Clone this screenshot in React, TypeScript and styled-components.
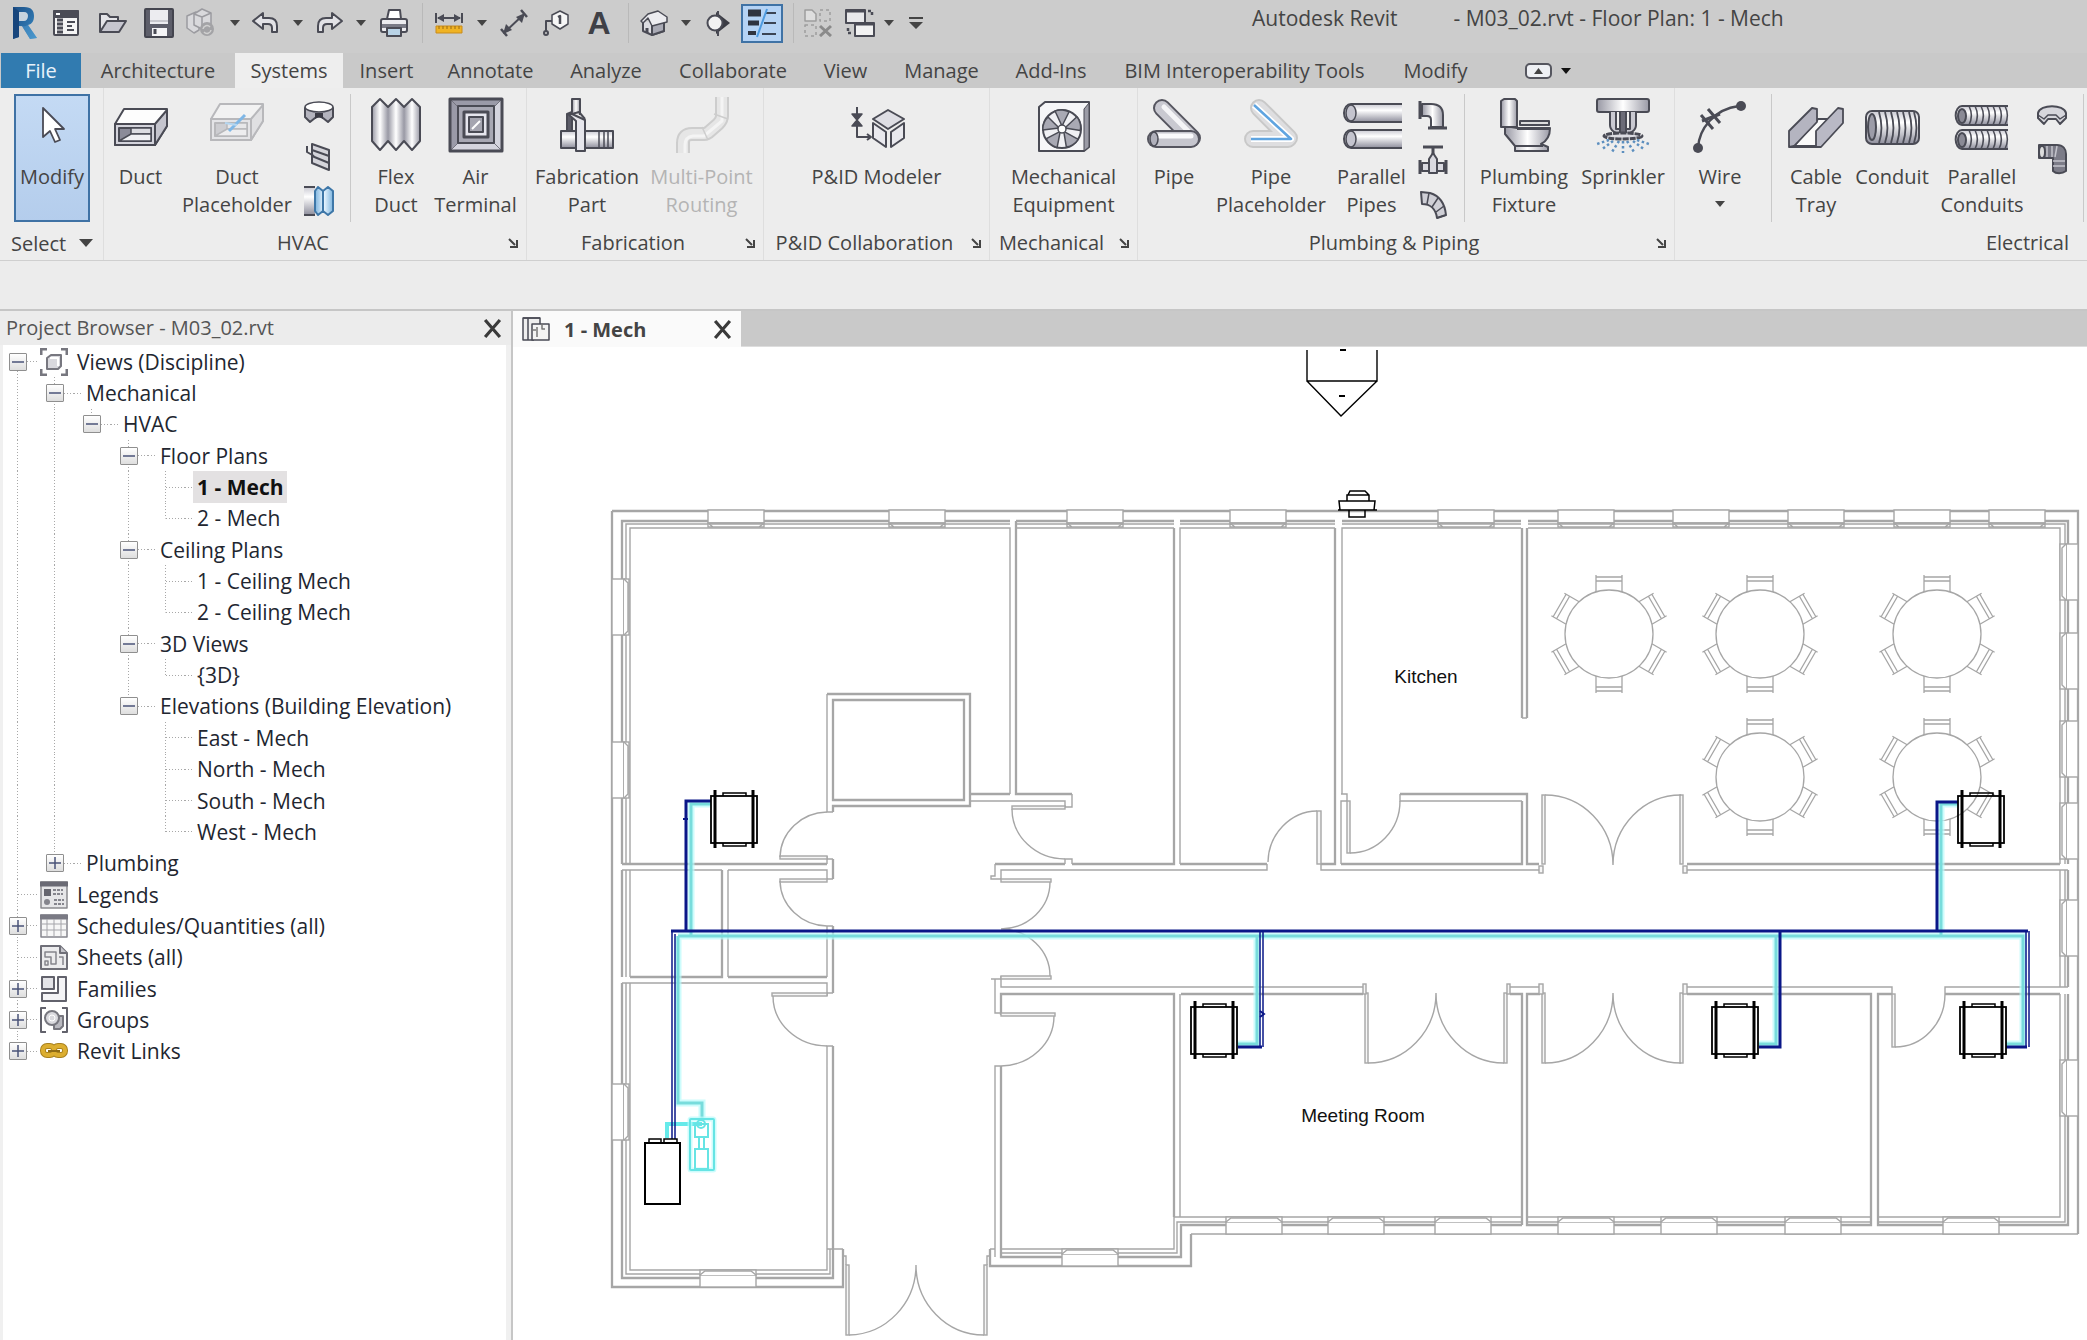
import React, { ReactNode } from "react";
import styled, { createGlobalStyle, css } from "styled-components";

const UI_FONT = `"Open Sans", "Noto Sans", sans-serif`;
const DARK = "#4a4b55";
const GREY = "#a6a6a6";

const Global = createGlobalStyle`
  * { box-sizing: border-box; }
  body { margin: 0; background: #ffffff; font-family: ${UI_FONT}; font-size: 20px; color: #444444; overflow: hidden; }
  button { font: inherit; color: inherit; background: none; border: 0; padding: 0; margin: 0; }
  h1, h2, ul { margin: 0; padding: 0; font: inherit; }
  svg { display: block; flex: none; }
`;

/* ---------- layout ---------- */

const Shell = styled.div`
  display: flex;
  flex-direction: column;
  height: 100vh;
`;

const TitleBar = styled.header`
  display: flex;
  height: 53px;
  flex: none;
  background: #cccccc;
  overflow: hidden;
`;

const QuickAccess = styled.div`
  display: flex;
  align-items: center;
  height: 46px;
  flex: none;
`;

const QuickButton = styled.button<{ $w: number }>`
  display: flex;
  align-items: center;
  justify-content: center;
  width: ${(p) => p.$w}px;
  height: 40px;
`;

const ActiveFrame = styled.span`
  display: flex;
  align-items: center;
  justify-content: center;
  width: 42px;
  height: 39px;
  border: 2px solid #3f72a5;
  background: #b5d3f5;
`;

const QuickDivider = styled.span<{ $w: number }>`
  display: flex;
  justify-content: center;
  width: ${(p) => p.$w}px;
  &::before {
    content: "";
    width: 1px;
    height: 40px;
    background: #b9b9b9;
  }
`;

const Caption = styled.h1`
  display: flex;
  align-items: center;
  gap: 56px;
  height: 36px;
  padding-left: 320px;
  font-size: 21px;
  white-space: nowrap;
`;

const TabBar = styled.nav`
  display: flex;
  height: 35px;
  flex: none;
  padding-left: 1px;
  background: #c9c9c9;
  overflow: hidden;
`;

const RibbonTab = styled.button<{ $w: number; $kind?: "file" | "active" }>`
  width: ${(p) => p.$w}px;
  flex: none;
  line-height: 36px;
  white-space: nowrap;
  ${(p) => p.$kind === "file" && css`background: #317bb0; color: #e8f2fa;`}
  ${(p) => p.$kind === "active" && css`background: #eeeeee;`}
`;

const TabToggle = styled.button`
  display: flex;
  align-items: center;
  gap: 9px;
  margin-left: 38px;
`;

const Ribbon = styled.div`
  display: flex;
  height: 173px;
  flex: none;
  background: #ededed;
  border-bottom: 1px solid #cfcfcf;
  overflow: hidden;
`;

const PanelBox = styled.section<{ $w: number }>`
  display: flex;
  flex-direction: column;
  width: ${(p) => p.$w}px;
  flex: none;
  border-right: 1px solid #dedede;
`;

const PanelBody = styled.div<{ $center?: boolean; $pad?: number }>`
  display: flex;
  height: 138px;
  padding: 6px 0 0 ${(p) => p.$pad ?? 0}px;
  justify-content: ${(p) => (p.$center ? "center" : "flex-start")};
`;

const PanelFooter = styled.div`
  display: flex;
  align-items: center;
  height: 34px;
`;

const PanelName = styled.h2`
  flex: 1;
  text-align: center;
  line-height: 34px;
  white-space: nowrap;
`;

const Launcher = styled.button`
  display: flex;
  justify-content: flex-end;
  width: 24px;
  padding-right: 8px;
`;

const SelectMenu = styled.button`
  display: flex;
  align-items: center;
  gap: 13px;
  padding-left: 11px;
`;

const BigButton = styled.button<{ $w: number; $active?: boolean; $dim?: boolean }>`
  display: flex;
  flex-direction: column;
  align-items: center;
  width: ${(p) => p.$w}px;
  height: 128px;
  flex: none;
  padding-top: 3px;
  gap: 10px;
  line-height: 28px;
  white-space: pre-line;
  text-align: center;
  color: ${(p) => (p.$dim ? "#b4b4b4" : "#444444")};
  ${(p) =>
    p.$active &&
    css`
      background: linear-gradient(#c4daf4, #b4cdec);
      box-shadow: inset 0 0 0 2px #3f72a5;
    `}
`;

const SmallStack = styled.div`
  display: flex;
  flex-direction: column;
  align-items: center;
  width: 44px;
  flex: none;
  gap: 15px;
  padding-top: 6px;
`;

const PanelDivider = styled.span`
  width: 1px;
  height: 128px;
  margin: 0 10px 0 9px;
  flex: none;
  background: #c9c9c9;
`;

const OptionsBar = styled.div`
  height: 50px;
  flex: none;
  background: #ececec;
  border-bottom: 2px solid #c6c6c6;
`;

const Workspace = styled.div`
  display: flex;
  flex: 1;
  min-height: 0;
`;

const Browser = styled.aside`
  display: flex;
  flex-direction: column;
  width: 513px;
  flex: none;
  border-right: 2px solid #c6c6c6;
  box-shadow: inset 3px 0 #f0f0f0, inset -5px 0 #f0f0f0;
`;

const BrowserHead = styled.div`
  display: flex;
  align-items: center;
  justify-content: space-between;
  height: 34px;
  flex: none;
  padding: 0 9px 0 6px;
  background: #ececec;
  color: #555555;
`;

const BrowserTitle = styled.h2`
  line-height: 36px;
`;

const Tree = styled.ul`
  display: grid;
  grid-auto-rows: 1fr;
  height: 721px;
  margin-top: 1px;
  list-style: none;
  font-size: 21px;
  color: #222630;
`;

const TreeRow = styled.li`
  display: flex;
  align-items: stretch;
`;

type Guide = "none" | "full" | "up" | "down" | "tee" | "end";

const V = (size: string, at: string) =>
  `repeating-linear-gradient(to bottom, #a8a8a8 0 1px, transparent 1px 3px) 17px ${at} / 1px ${size} no-repeat`;
const H = `repeating-linear-gradient(to right, #a8a8a8 0 1px, transparent 1px 3px) 18px 50% / 19px 1px no-repeat`;

const guideBackground: Record<Guide, string> = {
  none: "none",
  full: V("100%", "0"),
  up: V("50%", "0"),
  down: V("50%", "100%"),
  tee: `${H}, ${V("100%", "0")}`,
  end: `${H}, ${V("50%", "0")}`,
};

const GuideCell = styled.span<{ $guide: Guide; $joined?: boolean }>`
  display: flex;
  align-items: center;
  width: 37px;
  flex: none;
  padding-left: 9px;
  background: ${(p) => (p.$joined ? `${H}, ` : "")}${(p) => guideBackground[p.$guide]};
`;

const Lead = styled.span`
  width: 8px;
  background: repeating-linear-gradient(to right, #a8a8a8 0 1px, transparent 1px 3px) 0 50% / 100% 1px no-repeat;
`;

const Expander = styled.button`
  display: flex;
  align-items: center;
  justify-content: center;
  width: 18px;
  height: 18px;
  border: 1px solid #8f8f8f;
  border-radius: 1px;
  background: linear-gradient(#ffffff, #dedede);
`;

const NodeIcon = styled.span`
  display: flex;
  align-items: center;
  padding: 0 5px 0 3px;
`;

const Label = styled.span<{ $current?: boolean }>`
  display: flex;
  align-items: center;
  padding: 0 4px;
  white-space: nowrap;
  ${(p) => p.$current && css`background: #e3e1e2; color: #111111; font-weight: 700;`}
`;

const Viewer = styled.main`
  display: flex;
  flex-direction: column;
  flex: 1;
  min-width: 0;
`;

const ViewTabs = styled.div`
  display: flex;
  height: 36px;
  flex: none;
  background: #c9c9c9;
  border-bottom: 1px solid #dddddd;
`;

const ViewTab = styled.div`
  display: flex;
  align-items: center;
  width: 228px;
  height: 36px;
  padding: 0 9px;
  gap: 14px;
  background: #fafafa;
  font-weight: 700;
  white-space: nowrap;
`;

const ViewTabName = styled.span`
  flex: 1;
`;

const CloseButton = styled.button`
  display: flex;
`;

const PlanSheet = styled.svg`
  flex: 1;
  width: 100%;
  min-height: 0;
  background: #ffffff;
`;

/* ---------- icons ---------- */

const Svg = ({ w, h, children }: { w: number; h: number; children: ReactNode }) => (
  <svg width={w} height={h} viewBox={`0 0 ${w} ${h}`} fill="none" stroke={DARK} strokeWidth="2" strokeLinejoin="round" aria-hidden="true">
    {children}
  </svg>
);

const DefsSvg = styled.svg`
  position: absolute;
`;

const Gradients = () => (
  <DefsSvg width="0" height="0" aria-hidden="true">
    <defs>
      <linearGradient id="metalV" x1="0" y1="0" x2="0" y2="1">
        <stop offset="0" stopColor="#c9c9d2" /><stop offset=".35" stopColor="#ffffff" /><stop offset="1" stopColor="#8e8e9c" />
      </linearGradient>
      <linearGradient id="metalH" x1="0" y1="0" x2="1" y2="0">
        <stop offset="0" stopColor="#9898a4" /><stop offset=".5" stopColor="#ffffff" /><stop offset="1" stopColor="#9a9aa6" />
      </linearGradient>
      <linearGradient id="blueH" x1="0" y1="0" x2="1" y2="0">
        <stop offset="0" stopColor="#7db4de" /><stop offset=".5" stopColor="#e8f5ff" /><stop offset="1" stopColor="#7db4de" />
      </linearGradient>
      <linearGradient id="logo" x1="0" y1="0" x2="1" y2="1">
        <stop offset="0" stopColor="#1c4f86" /><stop offset=".6" stopColor="#2e74ad" /><stop offset="1" stopColor="#4aa0d5" />
      </linearGradient>
    </defs>
  </DefsSvg>
);

const Arrow = ({ w = 10, c = "#444444" }: { w?: number; c?: string }) => (
  <svg width={w} height={Math.ceil(w / 2) + 1} viewBox="0 0 10 6" preserveAspectRatio="none" aria-hidden="true"><path d="M0 0H10L5 6Z" fill={c} /></svg>
);

const Cross = ({ s }: { s: number }) => (
  <svg width={s} height={s} viewBox="0 0 18 18" aria-hidden="true"><path d="M2 1L16 17M16 1L2 17" stroke="#3a3a3a" strokeWidth="3" /></svg>
);

const LogoIcon = () => (
  <svg width="26" height="34" viewBox="0 0 26 34" aria-hidden="true">
    <path d="M1 1H12C20 1 22 5 22 10C22 15 20 18 16 19L25 32L18 33L10 20H7V31L1 33Z" fill="url(#logo)" />
    <path d="M7 6H12C15 6 16 8 16 10C16 13 14 15 12 15H7Z" fill="#c6d3de" />
    <path d="M7 20H10L18 33L25 32L16 19C13 21 10 20 7 20Z" fill="#4b93c8" opacity=".6" />
    <path d="M1 1L7 5V31L1 33Z" fill="#17457c" />
  </svg>
);
const HomePageIcon = () => (
  <Svg w={28} h={28}>
    <rect x="2" y="2" width="24" height="24" rx="1" fill="#f4f4f4" />
    <rect x="2" y="2" width="24" height="6" fill={DARK} /><path d="M4 5H8" stroke="#fff" />
    <path d="M5 11H11M5 15H11M5 19H11M5 23H11" strokeWidth="3" />
    <path d="M15 13H23M15 17H20M15 21H22" />
  </Svg>
);
const OpenIcon = () => (
  <Svg w={30} h={24}>
    <path d="M2 21V3H9L12 6H20V10" fill="#e4e4e8" /><path d="M2 21L9 10H28L21 21Z" fill="#c6c6cf" />
  </Svg>
);
const SaveIcon = () => (
  <Svg w={30} h={30}>
    <rect x="1" y="1" width="28" height="28" rx="1" fill="#5d5e6a" stroke="#44454f" />
    <rect x="6" y="2" width="18" height="14" fill="#ececf0" stroke="none" /><path d="M6 13H24" stroke="#c8c8ce" />
    <rect x="8" y="20" width="15" height="8" fill="#f4f4f6" stroke="none" /><path d="M11 21V26" stroke={DARK} strokeWidth="3" />
  </Svg>
);
const SyncIcon = () => (
  <Svg w={30} h={30}>
    <g stroke="#9b9ba0" strokeWidth="1.500" fill="#d9d9dc">
      <path d="M2 8L11 4L14 6V22L9 25L2 20Z" /><path d="M9 6L17 1L26 5V18L17 21L9 17Z" /><path d="M9 6L17 9L26 5M17 9V21" />
    </g>
    <circle cx="22" cy="21" r="7" fill="#a3a3a6" stroke="none" />
    <path d="M18 21A4 4 0 0 1 25 19M26 22A4 4 0 0 1 19 24" stroke="#d0d0d0" strokeWidth="1.500" />
  </Svg>
);
const UndoIcon = () => (
  <Svg w={28} h={24}><path d="M2 10L12 2V7H18C24 7 26 11 26 15V21H21V17C21 14 19 13 17 13H12V18Z" fill="#e2e2e6" /></Svg>
);
const RedoIcon = () => (
  <Svg w={28} h={24}><path d="M26 10L16 2V7H10C4 7 2 11 2 15V21H7V17C7 14 9 13 11 13H16V18Z" fill="#e2e2e6" /></Svg>
);
const PrintIcon = () => (
  <Svg w={30} h={30}>
    <path d="M8 11L10 2H21L22 11Z" fill="#fff" /><rect x="2" y="11" width="26" height="13" rx="2" fill="#ececef" />
    <path d="M3 18H27" strokeWidth="4" stroke="#7a7b86" /><path d="M8 20H22V28H8Z" fill="#b9d3e6" />
  </Svg>
);
const MeasureIcon = () => (
  <Svg w={28} h={22}>
    <path d="M3 6H25M1 1V11M27 1V11" /><path d="M2 6L9 2V10ZM26 6L19 2V10Z" fill={DARK} stroke="none" />
    <rect x="1" y="14" width="26" height="7" fill="#f0b323" stroke="#c88b1c" strokeWidth="1" />
    <path d="M4 14V17M8 14V17M12 14V17M16 14V17M20 14V17M24 14V17" stroke="#9b6a12" strokeWidth="1" />
  </Svg>
);
const DimensionIcon = () => (
  <Svg w={30} h={30}>
    <path d="M7 23L23 8" /><path d="M4 26L7 16L13 22ZM26 5L23 15L17 9Z" fill={DARK} stroke="none" />
    <path d="M2 21L8 28M22 2L28 9" strokeWidth="2.500" />
  </Svg>
);
const TagIcon = () => (
  <Svg w={28} h={28}>
    <path d="M4 23V12H11" /><circle cx="4" cy="24" r="2" /><path d="M18 2L26 6V15L18 20L10 15V6Z" fill="#f6f6f6" strokeWidth="1.500" />
    <path d="M16 8L18 7V15" strokeWidth="2.500" />
  </Svg>
);
const TextTool = styled.span`
  font: 700 32px/36px "Liberation Sans", sans-serif;
  color: #3f4046;
`;
const HouseIcon = () => (
  <Svg w={28} h={28}>
    <path d="M3 13V22L12 26L24 22V11" fill="#dcdce1" /><path d="M12 15V26L24 22V9Z" fill="#a9aab5" />
    <path d="M1 12L8 5L18 2L27 8V13L12 17L8 9L3 14Z" fill="#ececf0" strokeWidth="1.500" /><path d="M7 19V24" strokeWidth="3" />
  </Svg>
);
const SectionIcon = () => (
  <Svg w={26} h={26}>
    <path d="M11 2L25 13L11 24Z" fill="#3b3c44" stroke="none" /><circle cx="10" cy="13" r="7.500" fill="#f2f2f2" /><path d="M13 1V5M13 21V26" />
  </Svg>
);
const ThinLinesIcon = () => (
  <Svg w={32} h={30}>
    <path d="M2 5H15" strokeWidth="7" stroke="#2f3440" /><path d="M2 15H13" strokeWidth="5" stroke="#2f3440" /><path d="M2 25H10" strokeWidth="4" stroke="#2f3440" />
    <path d="M20 5H30M18 15H30M16 26H30" stroke="#3b4454" /><path d="M21 1L11 29" stroke="#4e9be0" />
  </Svg>
);
const CloseHiddenIcon = () => (
  <Svg w={28} h={28}>
    <g stroke="#9d9d9d" strokeWidth="1.500"><path d="M1 1H8L12 5V12H1Z" fill="#dedede" /><path d="M16 1H26V12H16ZM1 16H12V27H1Z" strokeDasharray="3 3" /></g>
    <path d="M16 17L27 27M27 17L16 27" stroke="#8a8a8a" strokeWidth="3" />
  </Svg>
);
const SwitchIcon = () => (
  <Svg w={30} h={30}>
    <rect x="1" y="2" width="19" height="13" fill="#e8e8ea" /><path d="M1 3H20" strokeWidth="3" />
    <rect x="10" y="15" width="19" height="13" fill="#f2f2f2" /><path d="M10 16H29" strokeWidth="3" />
    <path d="M23 3H27V8M3 20V25H7" strokeDasharray="3 2" strokeWidth="2.500" />
  </Svg>
);
const CustomizeIcon = () => (
  <svg width="14" height="14" viewBox="0 0 14 14" aria-hidden="true"><path d="M0 1H14V3H0ZM0 6H14L7 13Z" fill="#444" /></svg>
);

const ModifyIcon = () => (
  <Svg w={56} h={56}><path d="M19 11V40L26 34L31 45L36 43L31 32L40 32Z" fill="#fff" strokeWidth="1.800" /></Svg>
);
const ductShape = (
  <>
    <path d="M2 27L11 12H54V29L42 48H2Z" fill="#fdfdfd" /><path d="M42 27L54 13V29L42 48Z" fill="#c5c5ce" />
    <path d="M2 27H42V48H2Z" fill="#d4d4dc" /><path d="M6 31H38V44H6Z" fill="#8b8b99" />
    <path d="M18 31H38V37H18Z" fill="#dcdce2" strokeWidth="1.500" /><path d="M6 44L18 37H38V44Z" fill="#f0f0f4" strokeWidth="1.500" /><path d="M2 27H42L54 13" strokeWidth="1" />
  </>
);
const DuctIcon = () => <Svg w={56} h={56}>{ductShape}</Svg>;
const DuctPlaceholderIcon = () => (
  <Svg w={56} h={56}>
    <g opacity=".32" transform="translate(0 -5)">{ductShape}</g>
    <path d="M20 34L36 18" stroke="#7fb7e6" strokeWidth="3" /><path d="M16 26L28 28" stroke="#b5d6f0" strokeWidth="2" />
  </Svg>
);
const DuctFittingIcon = () => (
  <Svg w={30} h={28}>
    <path d="M1 8V17L6 22L11 18C13 16 17 16 19 18L24 22L29 17V8Z" fill="#b4b4be" />
    <ellipse cx="15" cy="7" rx="14" ry="5" fill="#fff" strokeWidth="1.500" /><path d="M11 13H19V19C16 17 14 17 11 19Z" fill="#3b3b45" stroke="none" />
  </Svg>
);
const DuctAccessoryIcon = () => (
  <Svg w={30} h={28}>
    <path d="M8 1L25 7V27L8 20Z" fill="#d4d4da" /><path d="M8 7L25 13M8 13L25 20" /><path d="M3 3V9L10 13" />
  </Svg>
);
const ConvertFlexIcon = () => (
  <Svg w={30} h={30}>
    <rect x="0" y="1" width="11" height="28" fill="url(#metalV)" stroke="none" /><path d="M0 1H11M0 29H11" />
    <path d="M11 5L14 1L19 5L24 1L29 5V25L24 29L19 25L14 29L11 25Z" fill="url(#blueH)" stroke="#3e77a8" /><path d="M19 5V25" stroke="#3e77a8" />
  </Svg>
);
const FlexDuctIcon = () => (
  <Svg w={56} h={56}>
    {[4, 20, 36].map((x) => (
      <path key={x} d={`M${x} 10L${x + 8} 2L${x + 16} 10V44L${x + 8} 53L${x} 44Z`} fill="url(#metalH)" stroke="none" />
    ))}
    <path d="M4 10L12 2L20 10L28 2L36 10L44 2L52 10V44L44 53L36 44L28 53L20 44L12 53L4 44Z" />
  </Svg>
);
const AirTerminalIcon = () => (
  <Svg w={56} h={56}>
    <rect x="2" y="2" width="52" height="52" fill="#9a9aa8" /><path d="M2 54L54 54V2Z" fill="#d4d4de" stroke="none" />
    <path d="M2 2L54 54M54 2L2 54" stroke="#74747f" strokeWidth="1" />
    <rect x="10" y="9" width="36" height="37" fill="#a8a8b4" /><rect x="16" y="15" width="24" height="25" fill="#e6e6ee" strokeWidth="3" />
    <rect x="21" y="20" width="14" height="15" fill="#a5a5b0" /><path d="M24 32L32 24" stroke="#fff" /><rect x="2" y="2" width="52" height="52" strokeWidth="3" />
  </Svg>
);
const FabricationIcon = () => (
  <Svg w={56} h={56}>
    <rect x="2" y="34" width="52" height="17" fill="url(#metalV)" /><path d="M40 34V51M45 34V51M49 34V51" strokeWidth="1.500" />
    <path d="M8 34V17L13 15V34Z" fill="#5c5c68" /><path d="M13 15V2H21V18" fill="url(#metalH)" />
    <path d="M9 17L17 24V54H26V23L13 17Z" fill="#e6e6ec" /><path d="M13 17L20 15L26 22" />
  </Svg>
);
const MultiPointIcon = () => (
  <Svg w={56} h={56}>
    <g stroke="#cdcdcd">
      <path d="M9 56V46Q9 37 18 37H30Q33 37 36 34L44 27Q48 23 48 19V0" strokeWidth="14" />
      <path d="M9 57V46Q9 37 18 37H30Q33 37 36 34L44 27Q48 23 48 19V0" strokeWidth="10" stroke="#e6e6e6" />
      <path d="M11 57V48Q11 40 19 39H30L48 24V0" strokeWidth="3" stroke="#f4f4f4" />
      <path d="M28 30L34 43M40 17L54 22" strokeWidth="1.500" />
    </g>
  </Svg>
);
const PidIcon = () => (
  <Svg w={56} h={56}>
    <path d="M8 10V40H22M18 37L22 40L18 43" strokeWidth="2" /><path d="M3 17H13L8 23ZM3 29H13L8 23Z" fill={DARK} strokeWidth="1.500" />
    <path d="M24 22L39 13L55 22L39 32Z" fill="#dedee4" /><path d="M24 26V41L37 50V35ZM55 26V41L42 50V35Z" fill="#e9e9ee" />
  </Svg>
);
const MechanicalIcon = () => (
  <Svg w={56} h={56}>
    <path d="M3 10L9 5H53V50L48 54H3Z" fill="#f6f6f8" /><path d="M48 54V12L53 6V50Z" fill="#9b9ba6" strokeWidth="1" />
    <circle cx="26" cy="32" r="19" fill="#f0f0f4" />
    {[0, 72, 144, 216, 288].map((a) => (
      <path key={a} d="M26 29L19 14C24 12 30 13 33 15Z" fill="#a9a9b4" strokeWidth="1.500" transform={`rotate(${a} 26 32)`} />
    ))}
    <circle cx="26" cy="32" r="4" fill="#fff" strokeWidth="1.500" />
  </Svg>
);
const PipeIcon = () => (
  <Svg w={56} h={56}>
    <path d="M16 11L46 41" stroke="#55555f" strokeWidth="18" strokeLinecap="round" /><path d="M16 11L46 41" stroke="#c9c9d1" strokeWidth="14" strokeLinecap="round" />
    <path d="M18 10L47 39" stroke="#f4f4f7" strokeWidth="5" strokeLinecap="round" />
    <path d="M10 42H45" stroke="#55555f" strokeWidth="18" strokeLinecap="round" /><path d="M10 42H45" stroke="#c6c6ce" strokeWidth="14" strokeLinecap="round" />
    <path d="M10 39H45" stroke="#fafafc" strokeWidth="5" strokeLinecap="round" /><ellipse cx="8" cy="42" rx="4" ry="7" fill="#b0b0bb" strokeWidth="1.500" />
  </Svg>
);
const PipePlaceholderIcon = () => (
  <Svg w={56} h={56}>
    <path d="M16 11L46 41M10 42H45" stroke="#c8c8c8" strokeWidth="18" strokeLinecap="round" /><path d="M16 11L46 41M10 42H45" stroke="#dedee0" strokeWidth="14" strokeLinecap="round" />
    <path d="M11 8L48 42H8" stroke="#ffffff" strokeWidth="6" /><path d="M11 8L48 42H8" stroke="#5fa4e0" strokeWidth="2.500" />
  </Svg>
);
const ParallelPipesIcon = () => (
  <Svg w={60} h={56}>
    {[7, 33].map((y) => (
      <g key={y}>
        <path d={`M60 ${y}H9A7 9 0 0 0 9 ${y + 18}H60`} fill="url(#metalV)" /><ellipse cx="9" cy={y + 9} rx="5" ry="8" fill="#c4c4ce" strokeWidth="1.500" />
      </g>
    ))}
  </Svg>
);
const ElbowIcon = () => (
  <Svg w={30} h={30}>
    <path d="M4 4H13C22 4 25 9 25 15V27H13V20C13 17 11 16 9 16H4Z" fill="url(#metalH)" /><path d="M2 1V19M10 28H29" strokeWidth="3" />
  </Svg>
);
const ValveIcon = () => (
  <Svg w={30} h={30}>
    <path d="M5 2H25" strokeWidth="3" /><path d="M15 2V10" strokeWidth="3" /><path d="M11 14L15 8L19 14V28H11Z" fill="#d9d9e0" />
    <path d="M4 18H11V26H4ZM19 18H26V26H19Z" fill="#d9d9e0" /><path d="M2 15V29M28 15V29" strokeWidth="3" />
  </Svg>
);
const FlexPipeIcon = () => (
  <Svg w={30} h={30}>
    <path d="M3 2L12 3C22 6 27 15 28 25L19 28C18 20 13 14 4 14Z" fill="#cfcfd6" /><path d="M11 3L9 14M20 8L14 17M26 16L18 22M28 25L19 28" strokeWidth="1.500" />
  </Svg>
);
const FixtureIcon = () => (
  <Svg w={56} h={56}>
    <path d="M5 4L8 2H19L21 4V30H5Z" fill="url(#metalH)" /><path d="M9 30V37L19 49V54H52V50L45 47C51 44 54 38 54 31H21L15 30Z" fill="url(#metalH)" />
    <rect x="24" y="24" width="29" height="4" fill="#ddd" /><path d="M21 32H54M19 49H47" />
  </Svg>
);
const SprinklerIcon = () => (
  <Svg w={56} h={56}>
    <rect x="2" y="2" width="52" height="13" rx="2" fill="url(#metalH)" /><path d="M15 15V28C15 34 21 37 28 37C35 37 41 34 41 28V15" fill="#c9c9d1" /><path d="M21 15V32H35V15" fill="#eee" />
    <path d="M25 15V36H31V15" fill="#6c6c78" /><ellipse cx="28" cy="39" rx="19" ry="3" fill="#dcdce2" strokeWidth="3" strokeDasharray="6 1" />
    <path d="M14 43L2 47M18 44L6 53M24 44L17 55M28 44V56M32 44L39 55M38 44L50 53M42 43L54 47" stroke="#5d8fbf" strokeWidth="2.500" strokeDasharray="2.500 2.500" />
  </Svg>
);
const WireIcon = () => (
  <Svg w={56} h={56}>
    <path d="M6 51C7 32 22 12 47 9" strokeWidth="2.500" /><circle cx="6" cy="51" r="5" fill={DARK} stroke="none" /><circle cx="49" cy="9" r="5" fill={DARK} stroke="none" />
    <path d="M9 18L21 32M16 12L28 26M10 24L28 17" strokeWidth="3" />
  </Svg>
);
const CableTrayIcon = () => (
  <Svg w={56} h={56}>
    <path d="M6 49L30 22H50L30 49Z" fill="#fafafa" /><path d="M1 34L24 11L29 12V25L6 49L1 50Z" fill="#b4b4c0" strokeWidth="1.800" />
    <path d="M28 34L50 11L55 12V26L33 50H28Z" fill="#b9b9c5" strokeWidth="1.800" /><path d="M1 50H32" />
  </Svg>
);
const ConduitIcon = () => (
  <Svg w={56} h={56}>
    <rect x="2" y="14" width="53" height="33" rx="6" fill="url(#metalV)" /><ellipse cx="8" cy="30" rx="4" ry="13" fill="#9c9ca8" />
    {[15, 21, 27, 33, 39, 45, 50].map((x) => <path key={x} d={`M${x} 15C${x + 3} 25 ${x + 3} 37 ${x} 46`} strokeWidth="1.800" />)}
  </Svg>
);
const ParallelConduitsIcon = () => (
  <Svg w={56} h={56}>
    {[9, 33].map((y) => (
      <g key={y}>
        <path d={`M54 ${y}H8A6 9 0 0 0 8 ${y + 19}H54`} fill="url(#metalV)" /><ellipse cx="8" cy={y + 10} rx="4" ry="7" fill="#8a8a95" />
        {[15, 21, 27, 33, 39, 45, 51].map((x) => <path key={x} d={`M${x} ${y}C${x + 3} ${y + 6} ${x + 3} ${y + 13} ${x} ${y + 19}`} strokeWidth="1.500" />)}
      </g>
    ))}
  </Svg>
);
const TrayFittingIcon = () => (
  <Svg w={30} h={28}>
    <path d="M1 13C3 4 27 4 29 13V18L23 24L19 19H11L7 24L1 18Z" fill="#d6d6dc" /><path d="M1 15L7 19L11 15H19L23 19L29 15" strokeWidth="1.500" />
  </Svg>
);
const ConduitFittingIcon = () => (
  <Svg w={30} h={32}>
    <path d="M2 2H20C26 2 29 6 29 11V28C25 31 19 31 16 28V15H2Z" fill="#7c7c88" /><ellipse cx="5" cy="9" rx="3" ry="6" fill="#ddd" />
    <path d="M10 3V14M15 3V14M20 3L18 14M16 18H28M16 23H28" strokeWidth="1.500" stroke="#c4c4cc" />
  </Svg>
);

const LauncherIcon = () => (
  <svg width="10" height="10" viewBox="0 0 10 10" aria-hidden="true"><path d="M1 1L7 7M9 2V9H2" fill="none" stroke="#444" strokeWidth="2" /></svg>
);
const RibbonToggleIcon = () => (
  <svg width="27" height="16" viewBox="0 0 27 16" aria-hidden="true">
    <rect x="1" y="1" width="25" height="14" rx="4" fill="#eef0f4" stroke="#55565f" strokeWidth="2" /><path d="M9 11L13.500 5L18 11Z" fill="#444" />
  </svg>
);

const ViewsIcon = () => (
  <Svg w={28} h={28}>
    <g stroke="#77777f"><path d="M1 7V1H7M21 1H27V7M27 21V27H21M7 27H1V21" strokeWidth="3" /><path d="M7 10L11 7H21V18L18 21H7Z" fill="#d9d9de" /><path d="M10 10H18V18" stroke="#fff" /></g>
  </Svg>
);
const LegendsIcon = () => (
  <Svg w={28} h={28}>
    <rect x="1" y="1" width="26" height="26" fill="#e6e6e8" stroke="#8a8a8f" strokeWidth="1.500" /><path d="M0 3H28" strokeWidth="5" stroke="#6a6a74" />
    <rect x="4" y="8" width="7" height="7" fill="#66666f" stroke="none" /><circle cx="7" cy="21" r="3" fill="#85858d" stroke="none" /><path d="M13 9H23M13 13H23M14 19H24M14 23H24" stroke="#85858d" strokeDasharray="3 1" />
  </Svg>
);
const SchedulesIcon = () => (
  <Svg w={28} h={24}>
    <rect x="1" y="1" width="26" height="22" fill="#f7f7f7" stroke="#85858d" strokeWidth="1.500" /><path d="M0 3H28" strokeWidth="5" stroke="#7a7a84" />
    <path d="M7 5V23M14 5V23M21 5V23M1 10H27M1 16H27" strokeWidth="1" stroke="#a5a5aa" />
  </Svg>
);
const SheetsIcon = () => (
  <Svg w={28} h={26}>
    <path d="M1 2H20L27 9V25H1Z" fill="#ececee" stroke="#6f6f78" /><path d="M20 2V9H27" fill="#c4c4ca" stroke="#6f6f78" />
    <path d="M5 8H16V20H11V13H5ZM5 17H8V21H5ZM19 13H23V21" strokeWidth="1.500" stroke="#85858d" />
  </Svg>
);
const FamiliesIcon = () => (
  <Svg w={28} h={28}><path d="M2 2H14V14H2Z" fill="#e4e4e8" stroke="#62626c" /><path d="M18 2H26V26H2V18H18Z" fill="#f4f4f6" stroke="#62626c" /></Svg>
);
const GroupsIcon = () => (
  <Svg w={28} h={28}>
    <path d="M6 2H1V26H6M22 2H27V26H22" stroke="#62626c" /><path d="M14 10H23V20L20 23H14Z" fill="#b9b9c0" stroke="#77777f" />
    <circle cx="12" cy="12" r="7" fill="#d9d9de" stroke="#77777f" /><circle cx="12" cy="12" r="3" stroke="#fff" strokeWidth="1" />
  </Svg>
);
const LinksIcon = () => (
  <Svg w={28} h={16}>
    <rect x="3" y="3" width="11" height="9" rx="4" stroke="#a9821f" strokeWidth="6" /><rect x="14" y="3" width="11" height="9" rx="4" stroke="#a9821f" strokeWidth="6" />
    <rect x="3" y="3" width="11" height="9" rx="4" stroke="#dcae30" strokeWidth="4" /><rect x="14" y="3" width="11" height="9" rx="4" stroke="#dcae30" strokeWidth="4" />
    <path d="M8 8H20" stroke="#8f6c14" />
  </Svg>
);
const PlanViewIcon = () => (
  <Svg w={28} h={28}>
    <path d="M12 25H1V3H18V9" strokeWidth="1.500" fill="#eeeeee" /><path d="M6 3V25M1 3H18" strokeWidth="1.500" /><rect x="10" y="9" width="17" height="16" fill="#f4f4f4" strokeWidth="1.500" />
    <path d="M15 12V22M10 15H14M20 9V14H23" strokeWidth="1.500" stroke="#777" />
  </Svg>
);

/* ---------- ribbon ---------- */

const Panel = ({ name, w, center, pad, children }: { name: string; w: number; center?: boolean; pad?: number; children: ReactNode }) => (
  <PanelBox $w={w}>
    <PanelBody $center={center} $pad={pad}>{children}</PanelBody>
    <PanelFooter>
      <PanelName>{name}</PanelName>
      <Launcher aria-label={`${name} settings`}><LauncherIcon /></Launcher>
    </PanelFooter>
  </PanelBox>
);

const Tool = ({ label, w, icon, dim, menu }: { label: string; w: number; icon: ReactNode; dim?: boolean; menu?: boolean }) => (
  <BigButton $w={w} $dim={dim} disabled={dim}>
    {icon}
    <span>{label}</span>
    {menu && <Arrow />}
  </BigButton>
);

const tabs: [string, number, ("file" | "active")?][] = [
  ["File", 80, "file"], ["Architecture", 154], ["Systems", 108, "active"], ["Insert", 87], ["Annotate", 121], ["Analyze", 110],
  ["Collaborate", 144], ["View", 81], ["Manage", 111], ["Add-Ins", 108], ["BIM Interoperability Tools", 279], ["Modify", 103],
];

/* ---------- project browser ---------- */

type Node = { guides: Guide[]; box?: "-" | "+"; icon?: ReactNode; label: string; current?: boolean };
const n: Guide = "none";
const deep: Guide[] = ["full", "full", n, "full"];
const shallow: Guide[] = ["full", "full", n, n];

const nodes: Node[] = [
  { guides: ["down"], box: "-", icon: <ViewsIcon />, label: "Views (Discipline)" },
  { guides: ["full", "full"], box: "-", label: "Mechanical" },
  { guides: ["full", "full", "up"], box: "-", label: "HVAC" },
  { guides: deep, box: "-", label: "Floor Plans" },
  { guides: [...deep, "tee"], label: "1 - Mech", current: true },
  { guides: [...deep, "end"], label: "2 - Mech" },
  { guides: deep, box: "-", label: "Ceiling Plans" },
  { guides: [...deep, "tee"], label: "1 - Ceiling Mech" },
  { guides: [...deep, "end"], label: "2 - Ceiling Mech" },
  { guides: deep, box: "-", label: "3D Views" },
  { guides: [...deep, "end"], label: "{3D}" },
  { guides: ["full", "full", n, "up"], box: "-", label: "Elevations (Building Elevation)" },
  { guides: [...shallow, "tee"], label: "East - Mech" },
  { guides: [...shallow, "tee"], label: "North - Mech" },
  { guides: [...shallow, "tee"], label: "South - Mech" },
  { guides: [...shallow, "end"], label: "West - Mech" },
  { guides: ["full", "up"], box: "+", label: "Plumbing" },
  { guides: ["tee"], icon: <LegendsIcon />, label: "Legends" },
  { guides: ["full"], box: "+", icon: <SchedulesIcon />, label: "Schedules/Quantities (all)" },
  { guides: ["tee"], icon: <SheetsIcon />, label: "Sheets (all)" },
  { guides: ["full"], box: "+", icon: <FamiliesIcon />, label: "Families" },
  { guides: ["full"], box: "+", icon: <GroupsIcon />, label: "Groups" },
  { guides: ["up"], box: "+", icon: <LinksIcon />, label: "Revit Links" },
];

const TreeItem = ({ node }: { node: Node }) => {
  const last = node.guides.length - 1;
  return (
    <TreeRow>
      {node.guides.map((g, i) => (
        <GuideCell key={i} $guide={g} $joined={i === last && !!node.box}>
          {i === last && node.box && (
            <Expander aria-label={`${node.box === "-" ? "Collapse" : "Expand"} ${node.label}`}>
              <svg width="12" height="12" viewBox="0 0 12 12" aria-hidden="true">
                <path d={node.box === "-" ? "M0 6H12" : "M0 6H12M6 0V12"} stroke="#4a5378" strokeWidth="1.500" />
              </svg>
            </Expander>
          )}
        </GuideCell>
      ))}
      {node.icon ? <NodeIcon>{node.icon}</NodeIcon> : <Lead />}
      <Label $current={node.current}>{node.label}</Label>
    </TreeRow>
  );
};

/* ---------- floor plan ---------- */

const TopWindow = ({ x, w = 56 }: { x: number; w?: number }) => (
  <g fill="#fff"><rect x={x} y="510" width={w} height="13" /><path d={`M${x} 523H${x + w}V527H${x}ZM${x} 523L${x + 5} 527H${x + w - 5}L${x + w} 523`} /></g>
);
const BottomWindow = ({ x, y, w = 56 }: { x: number; y: number; w?: number }) => (
  <g fill="#fff"><rect x={x} y={y} width={w} height="5" /><rect x={x} y={y + 5} width={w} height="12" /><path d={`M${x} ${y + 5}L${x + 5} ${y + 1}H${x + w - 5}L${x + w} ${y + 5}`} /></g>
);
const LeftWindow = ({ y }: { y: number }) => (
  <g fill="#fff"><rect x="612" y={y} width="12" height="56" /><rect x="624" y={y} width="5" height="56" /><path d={`M624 ${y}L628 ${y + 4}V${y + 52}L624 ${y + 56}`} /></g>
);
const RightWindow = ({ y, h = 56 }: { y: number; h?: number }) => (
  <g fill="#fff"><rect x="2066" y={y} width="12" height={h} /><rect x="2060" y={y} width="6" height={h} /><path d={`M2066 ${y}L2062 ${y + 4}V${y + h - 4}L2066 ${y + h}`} /></g>
);

const Table = ({ x, y }: { x: number; y: number }) => (
  <g transform={`translate(${x} ${y})`} strokeWidth="1.300">
    <circle r="44" />
    {[0, 60, 120, 180, 240, 300].map((a) => (
      <path key={a} d="M-13 -42V-59M13 -42V-59M-13 -57H13M-13 -53H13" transform={`rotate(${a})`} />
    ))}
  </g>
);

const FanCoil = ({ x, y }: { x: number; y: number }) => (
  <g transform={`translate(${x} ${y})`} stroke="#000" fill="none" strokeWidth="2">
    <rect x="0" y="0" width="46" height="47" strokeWidth="1.800" />
    <path d="M12 0V-3H35V0M12 47V50H35V47" strokeWidth="1.500" />
    <path d="M4 -6V52M42 -6V52" strokeWidth="3" />
  </g>
);

const thick = [
  "M612 511H2078V1234M612 511V1287H843V1249",
  "M1191 1234V1266H990V1249",
  "M622 864V521H1010M622 870V977M622 983V1278H833V1046",
  "M1016 521H1174M1180 521H1335M1342 521H1521M1528 521H2068V864M2068 870V987M2068 994V1225H1878V994H1892",
  "M1016 521V794H1072M1174 528V864H1072M1335 528V864H1321M1522 528V718M1527 528V718",
  "M970 801V794H1010M827 694H970V794M833 700H964V800H833ZM970 801V806H833V812",
  "M622 864H827M1180 864H1267M995 864H1065M1341 864H1522V801M1400 794H1527V864H1539M1687 864H2060",
  "M722 870V977H630M728 977H827M833 859V879M833 926V993",
  "M1001 1015V994H1174V1217M1181 994H1363M1510 994H1522V1225M1540 994H1527V1225H1871V994H1687M1945 994H2060",
  "M1001 1066V1257H1181V1225H1522",
];

const thin = [
  "M626 864V524H1010M626 870V977M626 983V1274H830V1249M1016 524H1174M1180 524H1335M1342 524H1521M1528 524H2065V864M2065 870V987M2065 994V1222H1878M1871 1222H1527M1522 1222H1177V1253H1001",
  "M630 864V528H1010V794M630 870V977M630 983V1270H827V1046H833M1016 528H1174M1180 864V528H1335M1342 794V528H1521M1528 528H2060V864M2060 870V987M2060 994V1217H1878M1871 1217H1527M1522 1217H1174V1249H1001",
  "M827 694V812H833M970 801H1065V807H1072V794M1065 864V859H1072V864M1522 718H1527",
  "M622 870H722M728 870H827V879H833M728 870V977M827 856V864M827 859H833",
  "M622 983H827V996M827 870V879M827 926V977M827 926H833M827 993H833M827 1249H843",
  "M995 864V876H991V879H1001V870H1267V864M1001 976V987H1363M991 979H1001M995 979V1013H1001M1001 1066H995V1257M990 1249H995",
  "M1180 994V1217M1321 864V870H1539M1341 794H1347V801H1341V864M1400 794V801H1522M1687 870H2068M1510 987H1540M1687 987H1892V994M1945 994V987H2068",
  "M843 1256H846V1265M990 1256H987V1265M2078 1234H1191",
];

const doorLeaves = [
  [780, 856, 47, 3], [780, 879, 47, 3], [1012, 806, 53, 3], [1001, 879, 50, 3], [1001, 976, 50, 3], [772, 993, 55, 3], [1001, 1013, 54, 3],
  [1317, 811, 4, 53], [1347, 801, 3, 52], [1542, 795, 3, 69], [1680, 795, 3, 69], [1542, 993, 3, 70], [1680, 993, 3, 70], [1365, 993, 3, 70],
  [1504, 993, 3, 70], [1892, 994, 3, 53], [846, 1265, 3, 70], [984, 1265, 3, 70],
  [1539, 866, 4, 7], [1683, 866, 4, 7], [1539, 984, 4, 10], [1683, 984, 4, 10], [1363, 984, 3, 10], [1507, 984, 3, 10],
];

const swings = [
  "M827 812A48 46 0 0 0 780 857", "M780 881A48 46 0 0 0 827 926", "M1012 809A53 50 0 0 0 1065 859", "M1050 882A50 47 0 0 1 1001 929A50 47 0 0 1 1050 976",
  "M773 996A54 50 0 0 0 827 1046", "M1054 1016A54 50 0 0 1 1001 1066", "M1317 811A50 52 0 0 0 1268 862", "M1350 853A50 52 0 0 0 1400 801",
  "M1545 795A68 70 0 0 1 1613 865A68 70 0 0 1 1681 795", "M1545 1063A68 70 0 0 0 1613 993A68 70 0 0 0 1681 1063",
  "M1368 1063A68 70 0 0 0 1436 993A68 70 0 0 0 1504 1063", "M1895 1047A50 53 0 0 0 1945 994", "M849 1335A68 70 0 0 0 916 1265A68 70 0 0 0 984 1335",
];

const supply = "M678 936H2023V1044H2006M1257 936V1044H1238M1776 936V1044H1759M1941 936V804H1958M691 936V804H711M678 936V1103H702V1119";

const RoomName = styled.text`
  font: 19px "Liberation Sans", Arial, sans-serif;
  fill: #111111;
  stroke: none;
`;

const FloorPlan = () => (
  <PlanSheet viewBox="513 347 1574 993" preserveAspectRatio="xMidYMin meet" role="img" aria-label="Floor plan 1 - Mech" fill="none">
    <g stroke={GREY}>
      <path d={thin.join("")} strokeWidth="1.400" />
      <path d={thick.join("")} strokeWidth="2.300" />
      <g strokeWidth="1.400">
        {doorLeaves.map(([x, y, w, h], i) => <rect key={i} x={x} y={y} width={w} height={h} fill="#f6f6f6" />)}
        <path d={swings.join("")} />
        {[708, 889, 1067, 1230, 1438, 1558, 1673, 1788, 1894, 1989].map((x) => <TopWindow key={x} x={x} />)}
        {[579, 742, 1084].map((y) => <LeftWindow key={y} y={y} />)}
        {[544, 633, 721, 803, 900, 1060].map((y) => <RightWindow key={y} y={y} />)}
        {[1226, 1328, 1435, 1558, 1661, 1785, 1943].map((x) => <BottomWindow key={x} x={x} y={1217} />)}
        <BottomWindow x={700} y={1270} />
        <BottomWindow x={1062} y={1249} />
      </g>
      <Table x={1609} y={634} /><Table x={1760} y={634} /><Table x={1937} y={634} /><Table x={1760} y={777} /><Table x={1937} y={777} />
    </g>

    <path d={supply} stroke="#b8fbfb" strokeWidth="7" opacity=".7" />
    <path d={supply} stroke="#78dcdc" strokeWidth="3" />
    <path d="M667 1138V1124H702" stroke="#66eaea" strokeWidth="4" />
    <g stroke="#b8fbfb" strokeWidth="5" opacity=".7"><rect x="690" y="1119" width="24" height="51" rx="1" /></g>
    <g stroke="#66e4e4" strokeWidth="2">
      <rect x="690" y="1119" width="24" height="51" rx="1" /><path d="M695 1137V1124H708V1137ZM699 1137V1149M704 1137V1149M695 1149H708V1169H695Z" />
      <circle cx="701" cy="1124" r="4" />
    </g>

    <g stroke="#0a1788" strokeWidth="3">
      <path d="M671 931H2028M686 931V801H711M1780 931V1047H1759M1937 931V802H1958M1262 1047H1238M2027 1047H2006" />
      <path d="M672 931V1139M675 934V1139M1260 931V1047M1263 931V1047M2026 931V1047M2029 931V1047" strokeWidth="1.500" />
      <path d="M683 819H688M1260 1011L1264 1014L1260 1017" strokeWidth="2" />
    </g>

    <g stroke="#000000" strokeWidth="2">
      <rect x="645" y="1143" width="35" height="61" fill="#fff" /><path d="M649 1143V1139H661V1143M664 1143V1139H677V1143" strokeWidth="1.500" />
      <path d="M1307 350V381H1377V350M1307 381L1341 416L1377 381" strokeWidth="1.400" /><path d="M1340 350H1346M1339 396H1345" />
      <path d="M1348 495L1350 491H1365L1369 495V501H1347V495H1369M1339 501H1375L1374 510H1340ZM1338 510H1377M1349 510V517H1365V510" strokeWidth="1.500" />
    </g>
    <FanCoil x={711} y={796} /><FanCoil x={1191} y={1007} /><FanCoil x={1712} y={1007} /><FanCoil x={1960} y={1007} /><FanCoil x={1958} y={796} />

    <RoomName x="1426" y="683" textAnchor="middle">Kitchen</RoomName>
    <RoomName x="1363" y="1122" textAnchor="middle">Meeting Room</RoomName>
  </PlanSheet>
);

const Quick = ({ w, name, children }: { w: number; name: string; children: ReactNode }) => (
  <QuickButton $w={w} aria-label={name}>{children}</QuickButton>
);

export default function App() {
  return (
    <Shell>
      <Global />
      <Gradients />
      <TitleBar>
        <QuickAccess>
          <Quick w={49} name="Revit"><LogoIcon /></Quick>
          <Quick w={34} name="Home"><HomePageIcon /></Quick>
          <Quick w={60} name="Open"><OpenIcon /></Quick>
          <Quick w={32} name="Save"><SaveIcon /></Quick>
          <Quick w={50} name="Synchronize"><SyncIcon /></Quick>
          <Quick w={20} name="Synchronize options"><Arrow /></Quick>
          <Quick w={39} name="Undo"><UndoIcon /></Quick>
          <Quick w={27} name="Undo history"><Arrow /></Quick>
          <Quick w={38} name="Redo"><RedoIcon /></Quick>
          <Quick w={24} name="Redo history"><Arrow /></Quick>
          <Quick w={41} name="Print"><PrintIcon /></Quick>
          <QuickDivider $w={17} />
          <Quick w={35} name="Measure"><MeasureIcon /></Quick>
          <Quick w={32} name="Measure options"><Arrow /></Quick>
          <Quick w={32} name="Aligned dimension"><DimensionIcon /></Quick>
          <Quick w={52} name="Tag by category"><TagIcon /></Quick>
          <Quick w={34} name="Text"><TextTool>A</TextTool></Quick>
          <QuickDivider $w={24} />
          <Quick w={28} name="Default 3D view"><HouseIcon /></Quick>
          <Quick w={36} name="3D view options"><Arrow /></Quick>
          <Quick w={28} name="Section"><SectionIcon /></Quick>
          <Quick w={59} name="Thin lines"><ActiveFrame><ThinLinesIcon /></ActiveFrame></Quick>
          <QuickDivider $w={4} />
          <Quick w={46} name="Close inactive views"><CloseHiddenIcon /></Quick>
          <Quick w={37} name="Switch windows"><SwitchIcon /></Quick>
          <Quick w={22} name="Window list"><Arrow /></Quick>
          <Quick w={32} name="Customize toolbar"><CustomizeIcon /></Quick>
        </QuickAccess>
        <Caption>
          <span>Autodesk Revit</span>
          <span>- M03_02.rvt - Floor Plan: 1 - Mech</span>
        </Caption>
      </TitleBar>

      <TabBar>
        {tabs.map(([name, w, kind]) => <RibbonTab key={name} $w={w} $kind={kind}>{name}</RibbonTab>)}
        <TabToggle aria-label="Minimize ribbon"><RibbonToggleIcon /><Arrow c="#111111" /></TabToggle>
      </TabBar>

      <Ribbon>
        <PanelBox $w={104}>
          <PanelBody $pad={14}><BigButton $w={76} $active><ModifyIcon /><span>Modify</span></BigButton></PanelBody>
          <PanelFooter><SelectMenu>Select <Arrow w={14} /></SelectMenu></PanelFooter>
        </PanelBox>
        <Panel name="HVAC" w={423}>
          <Tool label="Duct" w={73} icon={<DuctIcon />} />
          <Tool label={"Duct\nPlaceholder"} w={120} icon={<DuctPlaceholderIcon />} />
          <SmallStack>
            <button aria-label="Duct fitting"><DuctFittingIcon /></button>
            <button aria-label="Duct accessory"><DuctAccessoryIcon /></button>
            <button aria-label="Convert to flex duct"><ConvertFlexIcon /></button>
          </SmallStack>
          <PanelDivider />
          <Tool label={"Flex\nDuct"} w={70} icon={<FlexDuctIcon />} />
          <Tool label={"Air\nTerminal"} w={89} icon={<AirTerminalIcon />} />
        </Panel>
        <Panel name="Fabrication" w={237} pad={3}>
          <Tool label={"Fabrication\nPart"} w={114} icon={<FabricationIcon />} />
          <Tool label={"Multi-Point\nRouting"} w={115} icon={<MultiPointIcon />} dim />
        </Panel>
        <Panel name="P&ID Collaboration" w={226} center>
          <Tool label="P&ID Modeler" w={150} icon={<PidIcon />} />
        </Panel>
        <Panel name="Mechanical" w={148} center>
          <Tool label={"Mechanical\nEquipment"} w={120} icon={<MechanicalIcon />} />
        </Panel>
        <Panel name="Plumbing & Piping" w={537}>
          <Tool label="Pipe" w={72} icon={<PipeIcon />} />
          <Tool label={"Pipe\nPlaceholder"} w={122} icon={<PipePlaceholderIcon />} />
          <Tool label={"Parallel\nPipes"} w={79} icon={<ParallelPipesIcon />} />
          <SmallStack>
            <button aria-label="Pipe fitting"><ElbowIcon /></button>
            <button aria-label="Pipe accessory"><ValveIcon /></button>
            <button aria-label="Flex pipe"><FlexPipeIcon /></button>
          </SmallStack>
          <PanelDivider />
          <Tool label={"Plumbing\nFixture"} w={98} icon={<FixtureIcon />} />
          <Tool label="Sprinkler" w={100} icon={<SprinklerIcon />} />
        </Panel>
        <Panel name="Electrical" w={730} pad={3}>
          <Tool label="Wire" w={84} icon={<WireIcon />} menu />
          <PanelDivider />
          <Tool label={"Cable\nTray"} w={68} icon={<CableTrayIcon />} />
          <Tool label="Conduit" w={84} icon={<ConduitIcon />} />
          <Tool label={"Parallel\nConduits"} w={96} icon={<ParallelConduitsIcon />} />
          <SmallStack>
            <button aria-label="Cable tray fitting"><TrayFittingIcon /></button>
            <button aria-label="Conduit fitting"><ConduitFittingIcon /></button>
          </SmallStack>
          <PanelDivider />
        </Panel>
      </Ribbon>
      <OptionsBar />

      <Workspace>
        <Browser>
          <BrowserHead>
            <BrowserTitle>Project Browser - M03_02.rvt</BrowserTitle>
            <CloseButton aria-label="Close project browser"><Cross s={19} /></CloseButton>
          </BrowserHead>
          <Tree>{nodes.map((node) => <TreeItem key={node.label} node={node} />)}</Tree>
        </Browser>
        <Viewer>
          <ViewTabs>
            <ViewTab>
              <PlanViewIcon />
              <ViewTabName>1 - Mech</ViewTabName>
              <CloseButton aria-label="Close view"><Cross s={19} /></CloseButton>
            </ViewTab>
          </ViewTabs>
          <FloorPlan />
        </Viewer>
      </Workspace>
    </Shell>
  );
}
